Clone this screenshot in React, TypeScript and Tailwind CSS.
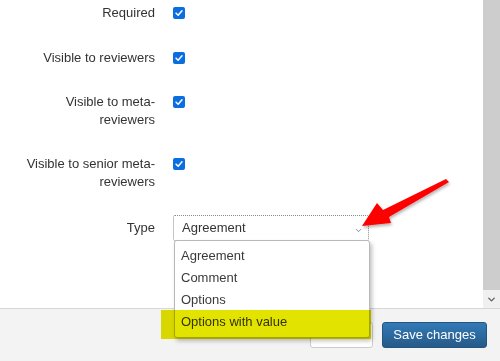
import { ChevronDown } from "lucide-react";

const rows = [
  { label: "Required", mb: "mb-[27px]" },
  { label: "Visible to reviewers", mb: "mb-[26px]" },
  { label: "Visible to meta-reviewers", mb: "mb-[26px]" },
  { label: "Visible to senior meta-reviewers", mb: "mb-[24px]" },
];

const options = ["Agreement", "Comment", "Options", "Options with value"];

function Check() {
  return (
    <span className="mt-[3px] flex h-[12px] w-[12px] items-center justify-center rounded-[2px] bg-[#0b6ee0]">
      <svg viewBox="0 0 12 12" className="h-[10px] w-[10px]">
        <path d="M2.5 6.2 L5 8.6 L9.6 3.4" fill="none" stroke="white" strokeWidth="1.8" strokeLinecap="round" strokeLinejoin="round" />
      </svg>
    </span>
  );
}

function App() {
  return (
    <div className="relative h-[361px] w-[500px] overflow-hidden bg-white font-['Liberation_Sans',Arial,sans-serif] text-[13px] text-[#333]">
      {/* scroll area */}
      <div className="flex h-[308px]">
        <div className="flex-1 pt-[4px]">
          {rows.map((r) => (
            <div key={r.label} className={`flex items-start gap-[18px] ${r.mb}`}>
              <div className="w-[155px] pl-[15px] text-right leading-[18px]">{r.label}</div>
              <Check />
            </div>
          ))}
          <div className="flex items-center gap-[18px]">
            <div className="w-[155px] pl-[15px] text-right leading-[18px]">Type</div>
            <div className="flex h-[26px] w-[196px] items-center justify-between rounded-[2px] border border-dotted border-[#8a8a8a] pl-[8px] pr-[5px]">
              <span>Agreement</span>
              <ChevronDown className="mt-[5px] h-[9px] w-[9px] text-[#666]" strokeWidth={2} />
            </div>
          </div>
        </div>
        <div className="flex w-[17px] flex-col bg-[#f0f0f0]">
          <div className="h-[290px] bg-[#cdcdcd]" />
          <div className="flex flex-1 items-center justify-center">
            <ChevronDown className="h-[11px] w-[11px] text-[#606060]" strokeWidth={3} />
          </div>
        </div>
      </div>

      {/* footer */}
      <div className="flex h-[53px] items-start justify-end gap-[9px] border-t border-[#d6d6d6] bg-[#f3f3f3] pr-[13px] pt-[13px]">
        <button className="h-[26px] w-[63px] rounded-[3px] border border-[#ccc] bg-white text-[13px] text-transparent">Close</button>
        <button className="h-[26px] w-[105px] rounded-[3px] border border-[#245580] bg-gradient-to-b from-[#337ab7] to-[#265a88] text-[13px] text-white">
          Save changes
        </button>
      </div>

      {/* open dropdown */}
      <div className="absolute left-[174px] top-[240px] w-[196px] rounded-[3px] border border-[#b9b9b9] bg-white py-[4px] shadow-[2px_3px_4px_rgba(0,0,0,0.25)]">
        {options.map((o) => (
          <div key={o} className="flex h-[22px] items-center pl-[6px] text-[#3a3a3a]">
            {o}
          </div>
        ))}
      </div>

      {/* highlighter mark */}
      <div className="absolute left-[161px] top-[310px] h-[29px] w-[210px] bg-[#e3e300] mix-blend-multiply" />

      {/* red arrow */}
      <svg className="absolute left-0 top-0" width="500" height="361" viewBox="0 0 500 361">
        <defs>
          <filter id="sh" x="-20%" y="-20%" width="140%" height="140%">
            <feDropShadow dx="1" dy="2" stdDeviation="1.5" floodColor="#000" floodOpacity="0.3" />
          </filter>
        </defs>
        <polygon
          points="362,226 377,203 383,210 446,179 449,182 389,217 391,223"
          fill="#ff0000"
          filter="url(#sh)"
        />
      </svg>
    </div>
  );
}

export default App;
